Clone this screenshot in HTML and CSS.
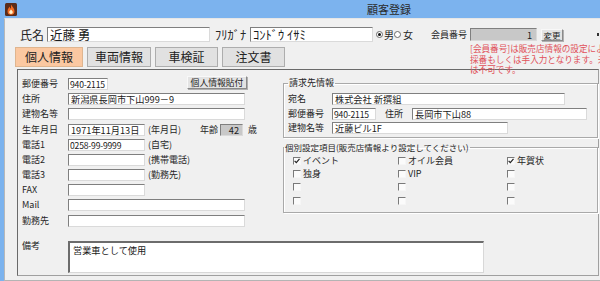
FILE: index.html
```html
<!DOCTYPE html>
<html lang="ja">
<head>
<meta charset="utf-8">
<title>顧客登録</title>
<link rel="stylesheet" href="styles.css">
</head>
<body>
<div class="window">
  <div class="titlebar">
    <svg class="app-icon" width="12" height="13" viewBox="0 0 12 13"><rect width="12" height="13" rx="1.5" fill="#5a2c1a"/><path d="M6 1.5 C7.5 4 9.5 5.5 9.5 8.2 A3.5 3.5 0 0 1 2.5 8.2 C2.5 6 4 5 4.5 3.5 C5 5 5.5 5.5 6 5.5 Z" fill="#f26a21"/><path d="M6 6.5 C7 7.5 7.8 8.3 7.8 9.3 A1.8 1.8 0 0 1 4.2 9.3 C4.2 8.3 5.2 7.5 6 6.5Z" fill="#fff1c8"/></svg>
    <div class="title">顧客登録</div>
  </div>
  <div class="frame">
    <div class="client">
      <div class="top-row">
        <span class="lbl-name">氏名</span>
        <div class="field name-field">近藤 勇</div>
        <span class="lbl-kana">ﾌﾘｶﾞﾅ</span>
        <div class="field kana-field">ｺﾝﾄﾞｳ ｲｻﾐ</div>
        <div class="radio-group">
          <span class="radio checked"></span><span class="radio-lbl">男</span>
          <span class="radio"></span><span class="radio-lbl second">女</span>
        </div>
        <span class="lbl-member">会員番号</span>
        <div class="field member-field">1</div>
        <div class="btn btn-change">変更</div>
        <span class="edge-mark"></span>
      </div>
      <div class="tab-row">
        <div class="tabs">
          <div class="tab active t1">個人情報</div>
          <div class="tab t2">車両情報</div>
          <div class="tab t3">車検証</div>
          <div class="tab t4">注文書</div>
        </div>
        <div class="note">
          <div>[会員番号]は販売店情報の設定により自動</div>
          <div>採番もしくは手入力となります。未入力</div>
          <div>は不可です。</div>
        </div>
      </div>
      <div class="panel">
        <div class="upper">
          <div class="personal">
            <div class="prow">
              <span class="lbl">郵便番号</span>
              <div class="field w40 num">940-2115</div>
              <div class="btn btn-paste">個人情報貼付</div>
            </div>
            <div class="prow">
              <span class="lbl">住所</span>
              <div class="field w177">新潟県長岡市下山999－9</div>
            </div>
            <div class="prow">
              <span class="lbl">建物名等</span>
              <div class="field w177"></div>
            </div>
            <div class="prow">
              <span class="lbl">生年月日</span>
              <div class="field w77">1971年11月13日</div>
              <span class="unit">(年月日)</span>
              <span class="age-lbl">年齢</span>
              <div class="field age-field">42</div>
              <span class="age-unit">歳</span>
            </div>
            <div class="prow">
              <span class="lbl">電話1</span>
              <div class="field w77 num">0258-99-9999</div>
              <span class="unit">(自宅)</span>
            </div>
            <div class="prow">
              <span class="lbl">電話2</span>
              <div class="field w77"></div>
              <span class="unit">(携帯電話)</span>
            </div>
            <div class="prow">
              <span class="lbl">電話3</span>
              <div class="field w77"></div>
              <span class="unit">(勤務先)</span>
            </div>
            <div class="prow">
              <span class="lbl">FAX</span>
              <div class="field w77"></div>
            </div>
            <div class="prow">
              <span class="lbl">Mail</span>
              <div class="field w177"></div>
            </div>
            <div class="prow">
              <span class="lbl">勤務先</span>
              <div class="field w177"></div>
            </div>
          </div>
          <div class="groups">
            <fieldset class="group billing">
              <legend>請求先情報</legend>
              <div class="grow">
                <span class="glbl">宛名</span>
                <div class="field g-name">株式会社 新撰組</div>
              </div>
              <div class="grow">
                <span class="glbl">郵便番号</span>
                <div class="field g-zip num">940-2115</div>
                <span class="g-addr-lbl">住所</span>
                <div class="field g-addr">長岡市下山88</div>
              </div>
              <div class="grow">
                <span class="glbl">建物名等</span>
                <div class="field g-bldg">近藤ビル1F</div>
              </div>
            </fieldset>
            <fieldset class="group custom">
              <legend>個別設定項目(販売店情報より設定してください)</legend>
              <div class="checks">
                <div class="chk"><span class="box on"><svg viewBox="0 0 6 6"><path d="M0.6 2.8 L2.3 4.6 L5.5 0.9" stroke="#222" stroke-width="1.2" fill="none"/></svg></span><span>イベント</span></div>
                <div class="chk"><span class="box"></span><span>オイル会員</span></div>
                <div class="chk"><span class="box on"><svg viewBox="0 0 6 6"><path d="M0.6 2.8 L2.3 4.6 L5.5 0.9" stroke="#222" stroke-width="1.2" fill="none"/></svg></span><span>年賀状</span></div>
                <div class="chk"><span class="box"></span><span>独身</span></div>
                <div class="chk"><span class="box"></span><span>VIP</span></div>
                <div class="chk"><span class="box"></span></div>
                <div class="chk"><span class="box"></span></div>
                <div class="chk"><span class="box"></span></div>
                <div class="chk"><span class="box"></span></div>
                <div class="chk"><span class="box"></span></div>
                <div class="chk"><span class="box"></span></div>
                <div class="chk"><span class="box"></span></div>
              </div>
            </fieldset>
          </div>
        </div>
        <div class="remarks-row">
          <span class="lbl remarks-lbl">備考</span>
          <div class="field remarks">営業車として使用</div>
        </div>
      </div>
    </div>
  </div>
</div>
</body>
</html>
```

FILE: styles.css
```css
* { box-sizing: border-box; }
html, body { margin: 0; padding: 0; }
body {
  width: 600px;
  height: 281px;
  overflow: hidden;
  background: #f0f0f0;
  font-family: "Noto Sans CJK JP", "Noto Sans", sans-serif;
  color: #262626;
  font-size: 9px;
  line-height: 12px;
}
.window {
  width: 600px;
  height: 281px;
  display: flex;
  flex-direction: column;
}
.titlebar {
  height: 18px;
  flex-shrink: 0;
  background: #7cb3ee;
  display: flex;
  align-items: center;
}
.app-icon { margin-left: 5px; flex-shrink: 0; }
.title {
  margin-left: 350px;
  font-size: 11px;
  line-height: 18px;
  color: #2a2a2a;
}
.frame {
  flex: 1;
  border-left: 4px solid #7cb3ee;
  display: flex;
}
.client {
  flex: 1;
  border-left: 1px solid #b8b8b8;
  border-top: 1px solid #e6e6e6;
  border-bottom: 1px solid #b4b4b4;
  background: #f0f0f0;
  display: flex;
  flex-direction: column;
  overflow: hidden;
}

/* generic field */
.field {
  background: #fff;
  border: 1px solid;
  border-color: #7f7f7f #dadada #dadada #7f7f7f;
  padding: 0 2px;
  white-space: nowrap;
  overflow: hidden;
  display: flex;
  align-items: center;
  flex-shrink: 0;
  font-size: 9.2px;
  line-height: 10px;
  color: #1a1a1a;
}
.field.num { font-size: 8.6px; letter-spacing: -0.2px; padding-left: 1px; }
.btn {
  background: #e3e3e3;
  border: 1px solid;
  border-color: #f8f8f8 #8a8a8a #8a8a8a #f8f8f8;
  box-shadow: 1px 1px 0 #b0b0b0;
  display: flex;
  align-items: center;
  justify-content: center;
  flex-shrink: 0;
  white-space: nowrap;
}

/* top row */
.top-row {
  height: 15px;
  margin: 8px 0 0 15px;
  display: flex;
  align-items: center;
  flex-shrink: 0;
}
.lbl-name { font-size: 12px; width: 27px; flex-shrink: 0; }
.name-field, .kana-field {
  height: 15px;
  font-size: 12.5px;
  line-height: 13px;
  overflow: visible;
}
.name-field { width: 163px; }
.kana-field { width: 123px; }
.lbl-kana { font-size: 12.5px; margin-left: 5px; width: 35px; flex-shrink: 0; white-space: nowrap; }
.radio-group { display: flex; align-items: center; margin-left: 3px; font-size: 10px; }
.radio {
  width: 7px;
  height: 7px;
  border-radius: 50%;
  border: 1px solid #6a6a6a;
  background: #fff;
  display: flex;
  align-items: center;
  justify-content: center;
}
.radio.checked::after {
  content: "";
  width: 3px;
  height: 3px;
  border-radius: 50%;
  background: #111;
}
.radio-lbl { margin-left: 1px; width: 10px; }
.radio-lbl.second { margin-left: 2px; }
.lbl-member { margin-left: 18px; width: 39px; flex-shrink: 0; white-space: nowrap; }
.member-field {
  width: 67px;
  height: 13px;
  background: #c8c8c8;
  justify-content: flex-end;
  padding-right: 4px;
}
.btn-change { margin-left: 4px; width: 22px; height: 12px; font-size: 8.5px; }
.edge-mark { margin-left: 34px; width: 2px; height: 3px; background: #333; }

/* tabs */
.tab-row {
  height: 27px;
  margin-left: 10px;
  display: flex;
  align-items: flex-start;
  flex-shrink: 0;
  position: relative;
  z-index: 1;
}
.tabs { display: flex; gap: 4px; margin-top: 5px; flex-shrink: 0; }
.tab {
  height: 20px;
  font-size: 12px;
  line-height: 14px;
  display: flex;
  align-items: center;
  justify-content: center;
  background: #e1e1e1;
  border: 1px solid #adadad;
  color: #222;
}
.tab.active { background: #fbc8a1; border-color: #dfb58f; }
.t1 { width: 68px; }
.t2 { width: 64px; }
.t3 { width: 63px; }
.t4 { width: 63px; }
.note {
  margin: 1px 0 0 185px;
  flex-shrink: 0;
  font-size: 8.6px;
  line-height: 10.5px;
  color: #e0505a;
  white-space: nowrap;
}

/* panel */
.panel {
  margin-left: 12px;
  width: 582px;
  height: 207px;
  flex-shrink: 0;
  border: 1px solid;
  border-color: #6a6a6a #a0a0a0 #a0a0a0 #6a6a6a;
  display: flex;
  flex-direction: column;
}
.upper { display: flex; }
.personal { width: 265px; flex-shrink: 0; padding: 6.4px 0 0 4px; }
.prow { height: 15.2px; display: flex; align-items: center; }
.lbl { width: 46px; flex-shrink: 0; white-space: nowrap; }
.prow .field { height: 12px; }
.w40 { width: 40px; }
.w77 { width: 77px; }
.w177 { width: 177px; }
.btn-paste { margin-left: 79px; width: 60px; height: 13px; font-size: 8.8px; margin-top: -2px; }
.unit { margin-left: 3px; width: 49px; flex-shrink: 0; white-space: nowrap; }
.age-lbl { margin-left: 3px; width: 19px; flex-shrink: 0; }
.prow .age-field {
  margin-left: 1px;
  width: 23px;
  height: 12px;
  background: #c8c8c8;
  justify-content: flex-end;
  padding-right: 3px;
}
.age-unit { margin-left: 5px; }

/* group boxes */
.groups {
  flex: 1;
  min-width: 0;
  padding-top: 7px;
  display: flex;
  flex-direction: column;
}
.group {
  margin: 0;
  min-width: 0;
  border: 1px solid #a9a9a9;
  box-shadow: 1px 1px 0 #fff, inset 1px 1px 0 #fff;
}
.group legend {
  padding: 0 1px;
  font-size: 9px;
  line-height: 12px;
  white-space: nowrap;
}
.billing { padding: 3px 0 1.5px 4px; }
.grow { height: 14.5px; display: flex; align-items: center; }
.glbl { width: 44px; flex-shrink: 0; white-space: nowrap; }
.grow .field { height: 12px; }
.g-name { width: 233px; }
.g-zip { width: 44px; }
.g-addr-lbl { margin-left: 9px; width: 27px; flex-shrink: 0; }
.g-addr { width: 175px; }
.g-bldg { width: 176px; }
.custom { margin-top: 3px; padding: 0; }
.custom legend { font-size: 8.5px; }
.checks {
  display: grid;
  grid-template-columns: 105px 109px 1fr;
  grid-auto-rows: 13.2px;
  margin: 1.4px 0 0 9px;
  padding-bottom: 4.8px;
}
.chk { display: flex; align-items: center; white-space: nowrap; }
.box {
  width: 8px;
  height: 8px;
  flex-shrink: 0;
  margin-right: 2px;
  border: 1px solid;
  border-color: #7a7a7a #f6f6f6 #f6f6f6 #7a7a7a;
  background: #fbfbfb;
  display: flex;
}
.box svg { width: 6px; height: 6px; }

/* remarks */
.remarks-row {
  margin-top: 12.6px;
  padding-left: 4px;
  display: flex;
  align-items: flex-start;
}
.remarks-lbl { margin-top: -1px; }
.remarks {
  width: 416px;
  height: 32px;
  align-items: flex-start;
  padding: 2px 3px;
  border-width: 2px 1px 1px 2px;
  border-color: #6c6c6c #d8d8d8 #d8d8d8 #6c6c6c;
}
```
